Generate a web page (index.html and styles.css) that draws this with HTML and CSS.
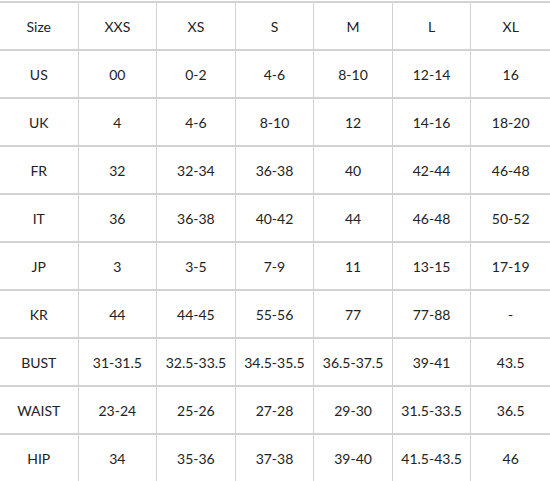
FILE: index.html
```html
<!DOCTYPE html>
<html>
<head>
<meta charset="utf-8">
<link rel="stylesheet" href="styles.css">
</head>
<body>
<div class="wrap">
<table class="sizes">
<tbody>
<tr><td>Size</td><td>XXS</td><td>XS</td><td>S</td><td>M</td><td>L</td><td>XL</td></tr>
<tr><td>US</td><td>00</td><td>0-2</td><td>4-6</td><td>8-10</td><td>12-14</td><td>16</td></tr>
<tr><td>UK</td><td>4</td><td>4-6</td><td>8-10</td><td>12</td><td>14-16</td><td>18-20</td></tr>
<tr><td>FR</td><td>32</td><td>32-34</td><td>36-38</td><td>40</td><td>42-44</td><td>46-48</td></tr>
<tr><td>IT</td><td>36</td><td>36-38</td><td>40-42</td><td>44</td><td>46-48</td><td>50-52</td></tr>
<tr><td>JP</td><td>3</td><td>3-5</td><td>7-9</td><td>11</td><td>13-15</td><td>17-19</td></tr>
<tr><td>KR</td><td>44</td><td>44-45</td><td>55-56</td><td>77</td><td>77-88</td><td>-</td></tr>
<tr><td>BUST</td><td>31-31.5</td><td>32.5-33.5</td><td>34.5-35.5</td><td>36.5-37.5</td><td>39-41</td><td>43.5</td></tr>
<tr><td>WAIST</td><td>23-24</td><td>25-26</td><td>27-28</td><td>29-30</td><td>31.5-33.5</td><td>36.5</td></tr>
<tr><td>HIP</td><td>34</td><td>35-36</td><td>37-38</td><td>39-40</td><td>41.5-43.5</td><td>46</td></tr>
</tbody>
</table>
</div>
</body>
</html>
```
FILE: styles.css
```css
html, body {
  margin: 0;
  padding: 0;
  background: #fff;
}
.wrap {
  padding-top: 1px;
}
.sizes {
  width: 550px;
  table-layout: fixed;
  border-collapse: separate;
  border-spacing: 0;
  font-family: Lato, "Open Sans", sans-serif;
  font-size: 14px;
  color: #222;
}
.sizes td {
  height: 46px;
  padding: 0;
  text-align: center;
  vertical-align: middle;
  border-top: 2px solid #d2d2d2;
  border-right: 1px solid #d2d2d2;
  box-sizing: content-box;
}
.sizes td:last-child {
  border-right: none;
}
```
